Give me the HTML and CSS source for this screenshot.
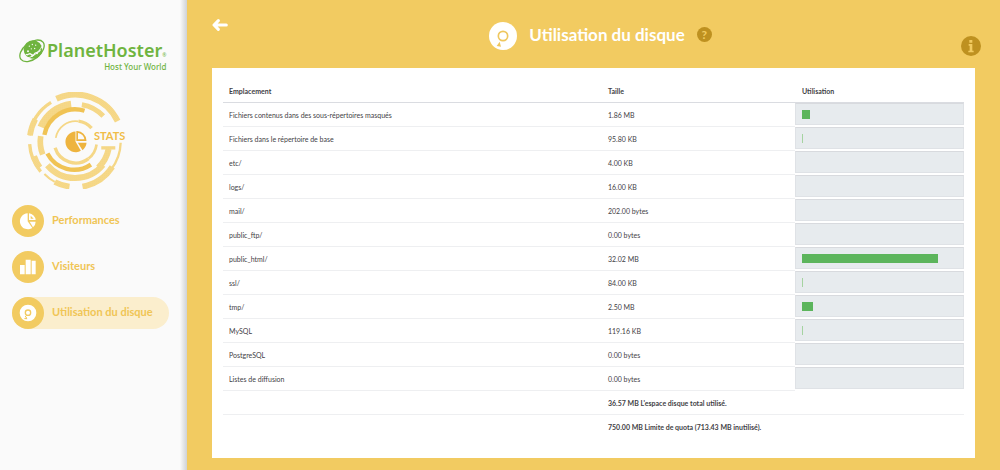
FILE: index.html
```html
<!DOCTYPE html>
<html lang="fr">
<head>
<meta charset="utf-8">
<meta name="viewport" content="width=device-width, initial-scale=1">
<title>Utilisation du disque</title>
<link rel="stylesheet" href="styles.css">
</head>
<body>
<div class="app">
  <aside class="sidebar">
    <div class="brand">
      <svg class="brand-globe" viewBox="0 0 78 69" aria-hidden="true">
        <ellipse cx="39" cy="34" rx="42" ry="25" transform="rotate(-38 39 34)" fill="none" stroke="#6fb43f" stroke-width="4"/>
        <circle cx="42" cy="30" r="28" fill="#6fb43f"/>
        <path d="M21 44c5 6 9-5 15 0s8 3 11-2 10 0 17-10" fill="none" stroke="#fafafa" stroke-width="4"/>
        <path d="M8 53c18 10 50-8 63-36" fill="none" stroke="#fafafa" stroke-width="3"/>
        <g fill="#fafafa"><circle cx="31" cy="20" r="2"/><circle cx="40" cy="15" r="2"/><circle cx="50" cy="17" r="2"/><circle cx="37" cy="28" r="2"/><circle cx="47" cy="27" r="2"/><circle cx="27" cy="35" r="3"/><circle cx="40" cy="49" r="3"/><circle cx="54" cy="41" r="3"/></g>
      </svg>
      <div class="brand-text">
        <div class="brand-name">PlanetHoster<span class="brand-mark">®</span></div>
        <div class="brand-tag">Host Your World</div>
      </div>
    </div>

    <div class="stats">
      <svg class="stats-rings" viewBox="20 20 290 290" aria-hidden="true">
        <defs>
          <pattern id="grain" width="6" height="6" patternUnits="userSpaceOnUse">
            <rect width="6" height="6" fill="#f9e3ab"/><rect width="3" height="3" fill="#f2cb61"/><rect x="3" y="3" width="3" height="3" fill="#f2cb61"/>
          </pattern>
        </defs>
        <g fill="none" stroke="url(#grain)">
          <path d="M108 40A140 140 0 0 1 291 107" stroke-width="18"/>
          <path d="M28 150A138 138 0 0 1 92 51" stroke-width="10"/>
          <path d="M29 150A138 138 0 0 1 45 101" stroke-width="17"/>
          <path d="M61 258A138 138 0 0 1 28 176" stroke-width="10"/>
          <path d="M58 246A132 132 0 0 1 41 212" stroke-width="18"/>
          <path d="M147 303A136 136 0 0 1 103 289" stroke-width="17"/>
          <path d="M103 289A136 136 0 0 1 72 265" stroke-width="6"/>
          <path d="M300 172A136 136 0 0 1 272 251" stroke-width="7"/>
          <path d="M275 244A136 136 0 0 1 186 303" stroke-width="18"/>
          <path d="M62 125A112 112 0 0 1 152 57" stroke-width="22"/>
          <path d="M184 58A112 112 0 0 1 248 92" stroke-width="15"/>
          <path d="M61 152A105 105 0 0 0 67 207" stroke-width="17"/>
          <path d="M264 190A103 103 0 0 1 233 246" stroke-width="18"/>
          <path d="M242 182H284V192H242Z" fill="url(#grain)" stroke="none"/>
          <path d="M247 238A108 108 0 0 1 81 239" stroke-width="18"/>
          <path d="M106 157A60 60 0 0 1 174 108" stroke-width="5"/>
          <path d="M174 107A62 62 0 0 1 213 128" stroke-width="10"/>
          <path d="M228 177A64 64 0 0 1 204 219" stroke-width="8"/>
          <path d="M204 219A64 64 0 0 1 104 187" stroke-width="10"/>
        </g>
        <g fill="none" stroke="#f0c354" stroke-width="13">
          <path d="M72 148A94 94 0 0 1 192 76"/>
          <path d="M211 237A90 90 0 0 1 81 204"/>
        </g>
        <path d="M165 168V138A31 31 0 1 0 181 196Z" fill="#eeb43f"/>
        <path d="M170 164V139A27 27 0 0 1 195 164Z" fill="#fafafa" stroke="#eeb43f" stroke-width="5"/>
        <path d="M172 172H198A31 31 0 0 1 186 194Z" fill="#eeb43f"/>
      </svg>
      <span class="stats-label">STATS</span>
    </div>

    <nav class="nav">
      <a class="nav-item" href="#performances">
        <span class="nav-icon"><svg viewBox="0 0 54 54" aria-hidden="true"><path d="M26 28V4a24 24 0 1 0 14 44Z" fill="#fff"/><path d="M30 24V4a22 22 0 0 1 20 20ZM32 29h18a23 23 0 0 1-8 17Z" fill="#fff"/><path d="M35 20V11l9 9Z" fill="#f2cb61"/></svg></span>
        <span class="nav-label">Performances</span>
      </a>
      <a class="nav-item" href="#visiteurs">
        <span class="nav-icon"><svg viewBox="0 0 54 54" aria-hidden="true"><path d="M3 21h14v28H3zM20 5h15v44H20zM38 8h12v41H38z" fill="#fff"/></svg></span>
        <span class="nav-label">Visiteurs</span>
      </a>
      <a class="nav-item nav-item-active" href="#disque" aria-current="page">
        <span class="nav-icon"><svg viewBox="0 0 54 54" aria-hidden="true"><circle cx="27" cy="27" r="25" fill="#fff"/><circle cx="27" cy="26" r="8" fill="none" stroke="#f2cb61" stroke-width="4"/><path d="M14 45l9-7 2 8Z" fill="#f2cb61"/><path d="M23 34l-5 5" stroke="#f2cb61" stroke-width="3"/></svg></span>
        <span class="nav-label">Utilisation du disque</span>
      </a>
    </nav>
  </aside>

  <main class="main">
    <header class="header">
      <button class="back" type="button" aria-label="Retour">
        <svg viewBox="0 0 48 36" aria-hidden="true"><path d="M19 5L6 18l13 13M7 18h36" fill="none" stroke="#fff" stroke-width="9" stroke-linecap="round" stroke-linejoin="round"/></svg>
      </button>
      <div class="title-group">
        <svg class="title-icon" viewBox="0 0 84 84" aria-hidden="true"><circle cx="42" cy="42" r="42" fill="#fff"/><circle cx="42" cy="42" r="14" fill="none" stroke="#efc75e" stroke-width="5"/><path d="M32 59l4 15-13-2Z" fill="#efc75e"/></svg>
        <h1 class="title">Utilisation du disque</h1>
        <button class="help" type="button" aria-label="Aide">?</button>
      </div>
      <button class="info" type="button" aria-label="Informations">
        <svg viewBox="0 0 60 60" aria-hidden="true"><circle cx="30" cy="30" r="30" fill="#be9120"/><path d="M25 12h9v8h-9zM23 24h11v20h4v5H22v-5h4V29h-3z" fill="#f2cb61"/></svg>
      </button>
    </header>

    <section class="panel">
      <table class="usage">
        <colgroup><col class="col-place"><col class="col-size"><col class="col-bar"></colgroup>
        <thead><tr><th scope="col">Emplacement</th><th scope="col">Taille</th><th scope="col">Utilisation</th></tr></thead>
        <tbody>
          <tr><td>Fichiers contenus dans des sous-répertoires masqués</td><td>1.86 MB</td><td class="bar-cell"><div class="track"><div class="bar" style="width:5.1%"></div></div></td></tr>
          <tr><td>Fichiers dans le répertoire de base</td><td>95.80 KB</td><td class="bar-cell"><div class="track"><div class="bar bar-thin" style="width:0.3%"></div></div></td></tr>
          <tr><td>etc/</td><td>4.00 KB</td><td class="bar-cell"><div class="track"></div></td></tr>
          <tr><td>logs/</td><td>16.00 KB</td><td class="bar-cell"><div class="track"></div></td></tr>
          <tr><td>mail/</td><td>202.00 bytes</td><td class="bar-cell"><div class="track"></div></td></tr>
          <tr><td>public_ftp/</td><td>0.00 bytes</td><td class="bar-cell"><div class="track"></div></td></tr>
          <tr><td>public_html/</td><td>32.02 MB</td><td class="bar-cell"><div class="track"><div class="bar" style="width:87.5%"></div></div></td></tr>
          <tr><td>ssl/</td><td>84.00 KB</td><td class="bar-cell"><div class="track"><div class="bar bar-thin" style="width:0.2%"></div></div></td></tr>
          <tr><td>tmp/</td><td>2.50 MB</td><td class="bar-cell"><div class="track"><div class="bar" style="width:6.8%"></div></div></td></tr>
          <tr><td>MySQL</td><td>119.16 KB</td><td class="bar-cell"><div class="track"><div class="bar bar-thin" style="width:0.3%"></div></div></td></tr>
          <tr><td>PostgreSQL</td><td>0.00 bytes</td><td class="bar-cell"><div class="track"></div></td></tr>
          <tr><td>Listes de diffusion</td><td>0.00 bytes</td><td class="bar-cell"><div class="track"></div></td></tr>
        </tbody>
        <tfoot>
          <tr><td></td><td colspan="2">36.57 MB L'espace disque total utilisé.</td></tr>
          <tr><td></td><td colspan="2">750.00 MB Limite de quota (713.43 MB inutilisé).</td></tr>
        </tfoot>
      </table>
    </section>
  </main>
</div>
</body>
</html>
```

FILE: styles.css
```css
* { box-sizing: border-box; }

body {
  margin: 0;
  font-family: Lato, "Liberation Sans", sans-serif;
  color: #3f4145;
  background: #f2cb61;
}

button { border: 0; padding: 0; background: none; cursor: pointer; }
svg { display: block; }

.app { display: flex; min-height: 100vh; }

/* Sidebar */
.sidebar {
  flex: none;
  width: 187px;
  padding: 39px 18px 0 12px;
  background: linear-gradient(to left, #cfd2d6, #fafafa 7px);
}

.brand { display: flex; gap: 2px; padding-left: 7px; color: #6fb43f; }
.brand-globe { flex: none; width: 26px; height: 24px; overflow: visible; }
.brand-text { font-family: "Noto Sans", "Open Sans", sans-serif; white-space: nowrap; }
.brand-name { font-size: 18px; line-height: 22px; font-weight: 600; }
.brand-mark { font-size: 5px; line-height: 5px; font-weight: 400; }
.brand-tag { font-size: 8px; line-height: 12px; font-weight: 500; text-align: right; }

.stats { display: flex; align-items: center; padding: 19px 0 0 15px; }
.stats-rings { flex: none; width: 97px; height: 97px; }
.stats-label {
  margin-left: -30px;
  padding-bottom: 10px;
  font-size: 11px;
  line-height: 12px;
  font-weight: 700;
  color: #f0bd48;
}

.nav { display: grid; gap: 14px; padding-top: 16px; }
.nav-item {
  display: flex;
  align-items: center;
  gap: 8px;
  border-radius: 16px;
  font-size: 11px;
  line-height: 16px;
  font-weight: 700;
  color: #f0c555;
  text-decoration: none;
  white-space: nowrap;
}
.nav-item-active { background: #fbeecd; }
.nav-label { padding-bottom: 2px; }
.nav-icon {
  display: grid;
  place-items: center;
  flex: none;
  width: 32px;
  height: 32px;
  border-radius: 50%;
  background: #f2cb61;
}
.nav-icon svg { width: 18px; height: 18px; }

/* Main area */
.main { flex: 1; min-width: 0; padding-bottom: 12px; display: flex; flex-direction: column; }

.header {
  display: grid;
  grid-template-columns: 1fr auto 1fr;
  height: 68px;
  padding: 0 19px 0 25px;
}
.back { justify-self: start; align-self: start; margin-top: 19px; }
.back svg { width: 16px; height: 12px; }
.title-group { display: flex; align-items: center; gap: 12px; padding: 4px 0 0 8px; }
.title-icon { width: 28px; height: 28px; }
.title { margin: 0; padding-bottom: 2px; font-size: 17px; line-height: 24px; font-weight: 700; color: #fff; white-space: nowrap; }
.help {
  width: 15px;
  height: 15px;
  margin-bottom: 3px;
  border-radius: 50%;
  background: #be9120;
  color: #f2cb61;
  font: 700 12px/15px Lato, sans-serif;
}
.info { justify-self: end; align-self: start; margin-top: 36px; }
.info svg { width: 20px; height: 20px; }

.panel { flex: 1; margin: 0 25px; padding: 11px 11px 18px; background: #fff; }

.usage {
  width: 100%;
  table-layout: fixed;
  border-collapse: separate;
  border-spacing: 0;
  font-size: 7px;
  line-height: 12px;
}
.col-bar { width: 169px; }
.col-size { width: 193px; }
.usage th, .usage td { height: 24px; padding: 0 6px; text-align: left; vertical-align: middle; }
.usage th { border-bottom: 1px solid #dadce1; font-weight: 700; }
.usage th:last-child { padding-left: 7px; }
.usage td { border-bottom: 1px solid #eeeff1; }
.usage .bar-cell { padding: 0; vertical-align: top; border-bottom-color: #fff; }
.usage tfoot td { font-weight: 700; }
.usage tfoot tr:last-child td { border-bottom: 0; }

.track {
  height: 22px;
  padding: 6px;
  border: 1px solid #dfe2e6;
  border-top-color: #d8dade;
  background: #e7ebee;
}
.bar { min-width: 1px; height: 9px; background: #5cb55c; }
.bar-thin { background: #a5d3a0; }
```
